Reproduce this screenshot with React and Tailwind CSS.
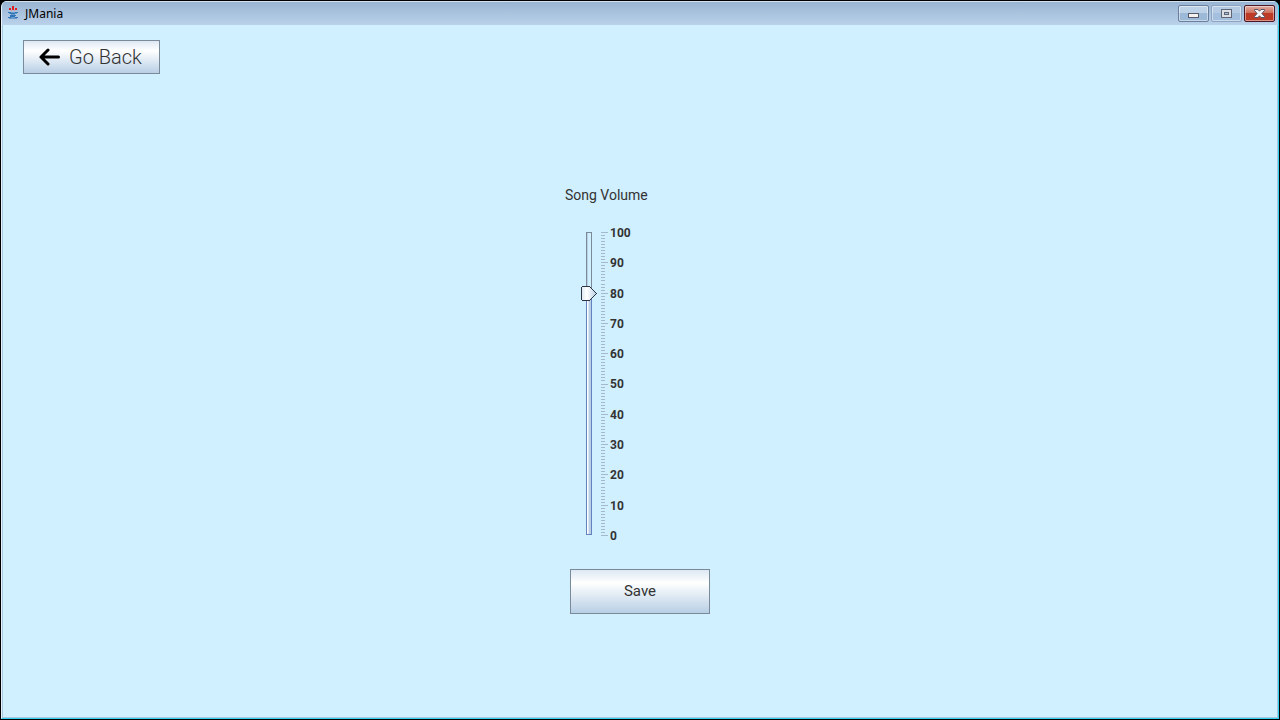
import { useState } from "react";

const TICKS = Array.from({ length: 101 }, (_, i) => i);
const LABELS = [100, 90, 80, 70, 60, 50, 40, 30, 20, 10, 0];
const metal =
  "border border-[#7a8a99] bg-linear-to-b from-[#dde8f3] via-white via-30% to-[#b8cfe5] text-[#333333]";

function JavaIcon() {
  return (
    <svg width="14" height="16" viewBox="0 0 14 16" aria-hidden="true" shapeRendering="crispEdges">
      <path d="M6 1h2v4H6zM3 3h2v2H3zM9 3h2v2H9z" fill="#e02020" />
      <path d="M5 5h1v1H5zM8 5h1v1H8z" fill="#d98f9c" />
      <path d="M2 7h3v1H2zM9 7h3v1H9zM4 8h5v1H4zM4 10h6v1H4zM2 12h3v1H2zM9 12h3v1H9zM4 11h5v1H4z" fill="#2f75b8" />
      <path d="M5 7h4v1H5zM9 8h2v1H9zM3 8h1v1H3zM5 9h4v1H5zM5 12h4v1H5zM3 13h8v1H3z" fill="#6799cb" />
    </svg>
  );
}

function TitleBar() {
  const glass =
    "flex h-[17px] w-[31px] items-center justify-center rounded-[2px] border shadow-[inset_0_0_0_1px_rgba(255,255,255,0.45)]";
  return (
    <header className="flex h-6 shrink-0 items-center bg-linear-to-b from-[#98b4d2] to-[#bad1ea] pl-1 pr-[3px] shadow-[inset_0_1px_0_#d3e2f1]">
      <JavaIcon />
      <h1 className="ml-[5px] flex-1 pt-0.5 font-['Noto_Sans',sans-serif] text-[12px] leading-4 text-black">JMania</h1>
      <div className="flex gap-0.5">
        <button type="button" aria-label="Minimize" className={`${glass} border-[#6a7f9b] bg-linear-to-b from-[#bdd1e7] from-50% to-[#9cb9d8] to-50%`}>
          <svg width="11" height="5" className="mt-1" shapeRendering="crispEdges">
            <rect x="0.5" y="0.5" width="10" height="4" rx="1" fill="#f5f2ef" stroke="#565b69" />
          </svg>
        </button>
        <button type="button" aria-label="Maximize" className={`${glass} border-[#8ca5c3] bg-linear-to-b from-[#b5cbe3] from-50% to-[#a4bfdd] to-50%`}>
          <svg width="11" height="9" shapeRendering="crispEdges">
            <rect x="0.5" y="0.5" width="10" height="8" fill="#dddfe7" stroke="#5e6678" />
            <rect x="3.5" y="3.5" width="4" height="2" fill="#a9bfd9" stroke="#5e6678" />
          </svg>
        </button>
        <button type="button" aria-label="Close" className={`${glass} border-[#4b1828] bg-linear-to-b from-[#dda094] from-10% via-[#cc6855] via-50% to-[#bd3b26] to-50%`}>
          <svg width="11" height="9" viewBox="0 0 11 9">
            <path d="M.5.5h3.500L5.500 2.200 7 .5h3.500v1L7.900 4.500l2.600 3v1H7L5.500 6.800 4 8.500H.5v-1l2.600-3L.5 1.500z" fill="#f6f4f5" stroke="#57546a" />
          </svg>
        </button>
      </div>
    </header>
  );
}

function VolumeSlider({ value, onChange }) {
  const y = 10 + Math.floor((100 - value) * 3.03);
  return (
    <div className="flex h-[323px] gap-0.5 pl-4">
      <div className="relative h-full w-[27px]">
        <svg width="27" height="323" className="block" aria-hidden="true" shapeRendering="crispEdges">
          <path d="M5.5 10.5h5v302h-5z" fill="#d0efff" stroke="#7a8a99" />
          <path d="M6 11h1v301H6z" fill="#b8cfe5" />
          <rect x="5.5" y={y + 0.5} width="5" height={312 - y} fill="#ffffff" stroke="#6382bf" />
          <rect x="7" y={y} width="1" height={312 - y} fill="#dde8f3" />
          <rect x="8" y={y} width="2" height={312 - y} fill="#b8cfe5" />
          {TICKS.map((t) => (
            <rect key={t} x="20" y={10 + Math.round(t * 3.03)} width={t % 10 === 0 ? 7 : 4} height="1" fill="#a3b8cc" />
          ))}
          <defs>
            <linearGradient id="thumb" x1="0" x2="1">
              <stop offset="0" stopColor="#dde8f3" />
              <stop offset="0.35" stopColor="#ffffff" />
              <stop offset="1" stopColor="#b8cfe5" />
            </linearGradient>
          </defs>
          <path
            transform={`translate(0 ${y})`}
            d="M1.5 -5.5H8.5L15.5 1.5L8.5 8.5H1.5L0.5 7.5V-4.5Z"
            fill="url(#thumb)"
            stroke="#2c3342"
          />
        </svg>
        <input
          id="song-volume"
          type="range"
          min="0"
          max="100"
          value={value}
          onChange={(e) => onChange(Number(e.target.value))}
          className="absolute inset-y-0 left-0 h-full w-4 cursor-pointer opacity-0 [direction:rtl] [writing-mode:vertical-lr]"
        />
      </div>
      <div className="flex flex-col justify-between text-[12px] leading-[22px] font-bold">
        {LABELS.map((n) => (
          <span key={n} className="h-5">{n}</span>
        ))}
      </div>
    </div>
  );
}

export default function App() {
  const [volume, setVolume] = useState(80);
  return (
    <div className="flex min-h-screen flex-col bg-black font-[Roboto,sans-serif] text-[#333333]">
      <div className="m-px flex flex-1 flex-col overflow-hidden rounded-t-md border-r border-b border-l border-r-[#35d0f0] border-b-[#35d0f0] border-l-[#e6f3fc] bg-[#d0efff]">
        <TitleBar />
        <main className="flex flex-1 flex-col border-r border-b border-l border-[#a9c9e0] px-5 pt-[15px]">
          <button type="button" className={`flex h-[34px] w-[137px] items-center gap-2 self-start pl-[15px] text-[20px] font-light ${metal}`}>
            <svg width="22" height="18" viewBox="0 0 22 18" fill="none" stroke="#000000" strokeWidth="3" strokeLinecap="round" strokeLinejoin="round" aria-hidden="true">
              <path d="M9 2L2 9l7 7M2 9h17.5" />
            </svg>
            Go Back
          </button>
          <div className="flex flex-1 flex-col justify-center pt-2">
            <div className="mx-auto flex w-[150px] flex-col">
              <label htmlFor="song-volume" className="mb-[17px] text-[14px] leading-5">Song Volume</label>
              <VolumeSlider value={volume} onChange={setVolume} />
              <button type="button" className={`mt-6 h-[45px] w-[140px] self-center text-[15px] ${metal}`}>Save</button>
            </div>
          </div>
        </main>
      </div>
    </div>
  );
}
